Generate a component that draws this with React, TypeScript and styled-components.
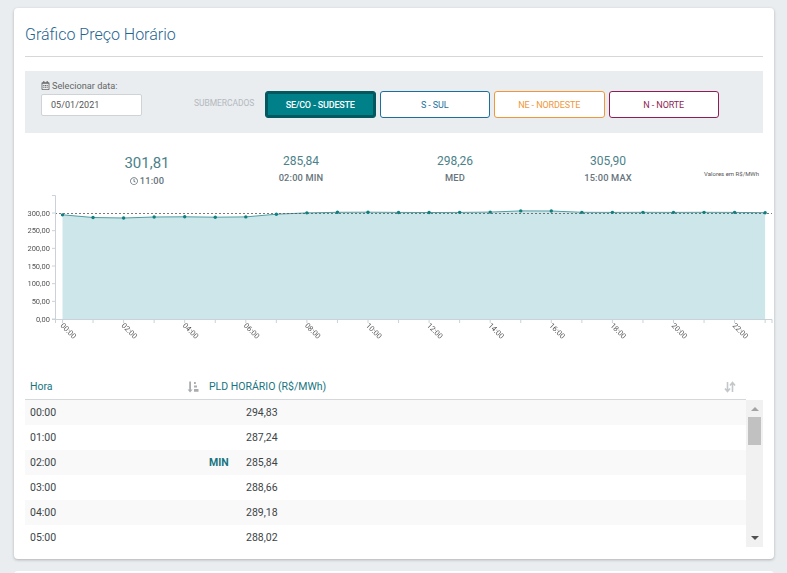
import React from 'react';
import styled, { createGlobalStyle } from 'styled-components';
import { FaRegCalendarAlt, FaRegClock } from 'react-icons/fa';

const GlobalStyle = createGlobalStyle`
  html, body {
    margin: 0;
    padding: 0;
    height: 573px;
    overflow: hidden;
    background: #e9edf0;
    font-family: 'Roboto', 'Liberation Sans', sans-serif;
  }
`;

const Page = styled.div`
  padding: 8px 13px 0 14px;
  display: flex;
  flex-direction: column;
  gap: 12px;
`;

const Card = styled.section`
  background: #fff;
  border-radius: 4px;
  box-shadow: 0 1px 3px rgba(0, 0, 0, 0.25);
  height: 551px;
  padding: 0 11px;
  box-sizing: border-box;
  overflow: hidden;
`;

const NextCard = styled.div`
  background: #fff;
  height: 20px;
  border-radius: 4px;
`;

const Title = styled.h2`
  margin: 0;
  height: 48px;
  border-bottom: 1px solid #d5d8da;
  font-size: 16px;
  font-weight: 300;
  line-height: 53px;
  color: #1f6590;
`;

const FilterBar = styled.div`
  margin-top: 14px;
  height: 62px;
  background: #e9edf0;
  display: flex;
  align-items: flex-start;
`;

const DateField = styled.div`
  margin: 8px 0 0 16px;
  width: 128px;
`;

const DateLabel = styled.label`
  display: flex;
  align-items: center;
  gap: 2px;
  height: 13px;
  font-size: 9.2px;
  color: #666;
`;

const DateInput = styled.div`
  margin-top: 2px;
  width: 101px;
  height: 22px;
  box-sizing: border-box;
  border: 1px solid #cfd3d6;
  border-radius: 2px;
  background: #fff;
  padding-left: 9px;
  font-size: 9px;
  letter-spacing: 0.05px;
  line-height: 20px;
  color: #555;
`;

const MarketLabel = styled.span`
  margin: 26px 0 0 25px;
  width: 71px;
  font-size: 8.5px;
  line-height: 12px;
  letter-spacing: -0.05px;
  color: #b4b9bd;
`;

const MarketList = styled.div`
  margin-top: 20px;
  display: flex;
  gap: 4px;
`;

const MarketButton = styled.button<{ $color: string; $active?: boolean }>`
  width: 110.5px;
  height: 27px;
  padding: 0;
  box-sizing: border-box;
  border: 1px solid ${(p) => p.$color};
  border-radius: 3px;
  background: ${(p) => (p.$active ? '#00818a' : '#fff')};
  color: ${(p) => (p.$active ? '#fff' : p.$color)};
  box-shadow: ${(p) => (p.$active ? 'inset 0 0 0 2px #03575f' : 'none')};
  font-family: inherit;
  font-size: 9px;
  font-weight: ${(p) => (p.$active ? 500 : 400)};
  letter-spacing: ${(p) => (p.$active ? '-0.2px' : '-0.1px')};
`;

const StatsRow = styled.div`
  margin-top: 20px;
  height: 44px;
  display: grid;
  grid-template-columns: 199px 154px 154px 152px 79px;
  color: #4b8189;
`;

const Stat = styled.div<{ $big?: boolean }>`
  padding-left: ${(p) => (p.$big ? '45px' : '0')};
  text-align: center;
  font-size: ${(p) => (p.$big ? '15px' : '12px')};
  line-height: ${(p) => (p.$big ? '20px' : '17px')};
`;

const StatCaption = styled.div`
  display: flex;
  align-items: center;
  justify-content: center;
  gap: 2px;
  font-size: 9.3px;
  font-weight: 500;
  letter-spacing: 0.15px;
  line-height: 15px;
  color: #66747c;
`;

const Units = styled.div`
  padding: 16px 4px 0 0;
  text-align: right;
  font-size: 6px;
  line-height: 10px;
  color: #555;
`;

const ChartBox = styled.svg`
  display: block;
  margin: -7px 0 0 -11px;
  width: 760px;
  height: 180px;
  overflow: visible;
  transform: translateZ(0);
`;

const TableHead = styled.div`
  height: 25px;
  margin: 4px 17px 0 0;
  border-bottom: 1px solid #d5d8da;
  display: flex;
  align-items: center;
  font-size: 10.5px;
  color: #17747f;
`;

const HoraHead = styled.span`
  width: 162px;
  padding-left: 5px;
  box-sizing: border-box;
`;

const SortIcon = styled.span`
  width: 22px;
  display: flex;
`;

const PriceHead = styled.span`
  flex: 1;
`;

const TableWrap = styled.div`
  display: flex;
  height: 147px;
  overflow: hidden;
`;

const Rows = styled.div`
  flex: 1;
`;

const Row = styled.div`
  height: 25px;
  display: grid;
  grid-template-columns: 184px 37px 1fr;
  align-items: center;
  font-size: 10.5px;
  color: #3c4448;

  &:nth-child(odd) {
    background: #f9f9f9;
  }
`;

const Hour = styled.span`
  padding-left: 5px;
`;

const MinTag = styled.span`
  font-weight: 700;
  font-size: 10.5px;
  color: #17747f;
`;

const Scrollbar = styled.div`
  width: 17px;
  background: #f1f1f1;
  display: flex;
  flex-direction: column;
  align-items: center;
`;

const ScrollArrow = styled.div<{ $down?: boolean }>`
  width: 0;
  height: 0;
  margin: ${(p) => (p.$down ? 'auto 0 7px' : '7px 0 6px')};
  border-left: 4px solid transparent;
  border-right: 4px solid transparent;
  ${(p) => (p.$down ? 'border-top: 4px solid #505050;' : 'border-bottom: 4px solid #a3a3a3;')}
`;

const ScrollThumb = styled.div`
  width: 13px;
  height: 28px;
  background: #c1c1c1;
`;

const values = [
  294.83, 287.24, 285.84, 288.66, 289.18, 288.02, 289.0, 296.5, 300.4, 302.0, 302.2, 301.6,
  301.5, 301.8, 302.6, 305.9, 305.6, 301.9, 301.8, 301.9, 301.8, 301.9, 301.8, 300.9,
];

const x0 = 62.5;
const xStep = 30.55;
const yAt = (v: number) => 319 - (v * 106) / 300;
const xAt = (i: number) => x0 + i * xStep;

const linePath = values.map((v, i) => `${i === 0 ? 'M' : 'L'}${xAt(i).toFixed(1)} ${yAt(v).toFixed(1)}`).join(' ');
const areaPath = `${linePath} L${xAt(23).toFixed(1)} 319 L${x0} 319 Z`;
const yTicks = [0, 50, 100, 150, 200, 250, 300];

// chart coordinates are page pixels, shifted by the viewBox so they read like the screenshot
const PriceChart = () => (
  <ChartBox viewBox="14 190 760 180">
    <path d={areaPath} fill="#cde6ea" />
    <path d={linePath} fill="none" stroke="#4f9ea3" strokeWidth="1" />
    <line x1="55" y1="213.5" x2="772" y2="213.5" stroke="#555" strokeWidth="0.8" strokeDasharray="2 2" />
    <path d="M52 195.5H55.5V323M52 319.5H772M772 319.5V323" fill="none" stroke="#c8d2d8" strokeWidth="1" />
    {yTicks.map((t) => (
      <g key={t}>
        <line x1="52" x2="55" y1={yAt(t)} y2={yAt(t)} stroke="#c8d2d8" />
        <text x="50" y={yAt(t) + 2.5} textAnchor="end" fontSize="7.5" fill="#555">
          {t},00
        </text>
      </g>
    ))}
    {values.map((v, i) => (
      <g key={i}>
        <line x1={xAt(i)} x2={xAt(i)} y1="319" y2="323" stroke="#c8d2d8" />
        <circle cx={xAt(i)} cy={yAt(v)} r="1.7" fill="#0f7f80" />
        {i % 2 === 0 && (
          <text
            x={xAt(i) - 2.5}
            y="326"
            fontSize="7.5"
            fill="#555"
            transform={`rotate(45 ${xAt(i) - 2.5} 326)`}
          >
            {String(i).padStart(2, '0')}:00
          </text>
        )}
      </g>
    ))}
  </ChartBox>
);

const SortAmountIcon = () => (
  <svg width="12" height="12" viewBox="0 0 12 12" fill="#a9adaf">
    <path d="M2.2 0.5h1.8v8h1.6L3.1 11.5 0.6 8.500h1.600z" />
    <path d="M7 1h1.800v2H7zM7 4.500h3v2H7zM7 8h4.500v2.800H7z" />
  </svg>
);

const SwapIcon = () => (
  <svg width="12" height="12" viewBox="0 0 12 12" fill="none" stroke="#c3c7c9" strokeWidth="1.6">
    <path d="M3.5 1v9M1 7.5l2.500 3 2.500-3" />
    <path d="M8.500 11V2M6 4.500l2.500-3 2.500 3" />
  </svg>
);

const markets = [
  { label: 'SE/CO - SUDESTE', color: '#03575f', active: true },
  { label: 'S - SUL', color: '#1c6f9c' },
  { label: 'NE - NORDESTE', color: '#f0973a' },
  { label: 'N - NORTE', color: '#8f1d55' },
];

const rows = [
  ['00:00', '294,83'],
  ['01:00', '287,24'],
  ['02:00', '285,84', 'MIN'],
  ['03:00', '288,66'],
  ['04:00', '289,18'],
  ['05:00', '288,02'],
];

export default function App() {
  return (
    <Page>
      <GlobalStyle />
      <Card>
        <Title>Gráfico Preço Horário</Title>
        <FilterBar>
          <DateField>
            <DateLabel>
              <FaRegCalendarAlt size={9} />
              Selecionar data:
            </DateLabel>
            <DateInput>05/01/2021</DateInput>
          </DateField>
          <MarketLabel>SUBMERCADOS</MarketLabel>
          <MarketList>
            {markets.map((m) => (
              <MarketButton key={m.label} $color={m.color} $active={m.active}>
                {m.label}
              </MarketButton>
            ))}
          </MarketList>
        </FilterBar>
        <StatsRow>
          <Stat $big>
            301,81
            <StatCaption>
              <FaRegClock size={8} />
              11:00
            </StatCaption>
          </Stat>
          <Stat>
            285,84
            <StatCaption>02:00 MIN</StatCaption>
          </Stat>
          <Stat>
            298,26
            <StatCaption>MED</StatCaption>
          </Stat>
          <Stat>
            305,90
            <StatCaption>15:00 MAX</StatCaption>
          </Stat>
          <Units>Valores em R$/MWh</Units>
        </StatsRow>
        <PriceChart />
        <TableHead>
          <HoraHead>Hora</HoraHead>
          <SortIcon>
            <SortAmountIcon />
          </SortIcon>
          <PriceHead>PLD HORÁRIO (R$/MWh)</PriceHead>
          <SortIcon>
            <SwapIcon />
          </SortIcon>
        </TableHead>
        <TableWrap>
          <Rows>
            {rows.map(([hour, price, tag]) => (
              <Row key={hour}>
                <Hour>{hour}</Hour>
                <MinTag>{tag}</MinTag>
                <span>{price}</span>
              </Row>
            ))}
          </Rows>
          <Scrollbar>
            <ScrollArrow />
            <ScrollThumb />
            <ScrollArrow $down />
          </Scrollbar>
        </TableWrap>
      </Card>
      <NextCard />
    </Page>
  );
}
